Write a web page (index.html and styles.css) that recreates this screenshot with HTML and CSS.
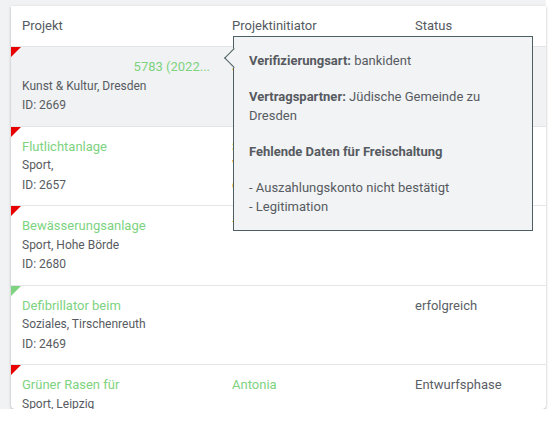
FILE: index.html
```html
<!DOCTYPE html>
<html lang="de">
<head>
<meta charset="utf-8">
<title>Projekte</title>
<link rel="stylesheet" href="styles.css">
</head>
<body>
<div class="page">
  <div class="card">
    <div class="row head">
      <div class="cell">Projekt</div>
      <div class="cell">Projektinitiator</div>
      <div class="cell">Status</div>
    </div>

    <div class="row item hover">
      <span class="flag red"></span>
      <div class="cell">
        <div class="title right">5783 (2022...</div>
        <div class="meta">Kunst &amp; Kultur, Dresden</div>
        <div class="meta">ID: 2669</div>
      </div>
      <div class="cell"><div class="title warn">Jüdische</div></div>
      <div class="cell"><div class="title status">in Prüfung</div></div>

      <div class="tooltip">
        <p><b>Verifizierungsart:</b> bankident</p>
        <p><b>Vertragspartner:</b> Jüdische Gemeinde zu Dresden</p>
        <p><b>Fehlende Daten für Freischaltung</b></p>
        <p>- Auszahlungskonto nicht bestätigt<br>- Legitimation</p>
      </div>
    </div>

    <div class="row item">
      <span class="flag red"></span>
      <div class="cell">
        <div class="title">Flutlichtanlage</div>
        <div class="meta">Sport,</div>
        <div class="meta">ID: 2657</div>
      </div>
      <div class="cell">
        <div class="title warn">SV</div>
        <div class="meta warn">Verein</div>
        <div class="meta warn">offen</div>
      </div>
      <div class="cell"><div class="title status">in Prüfung</div></div>
    </div>

    <div class="row item">
      <span class="flag red"></span>
      <div class="cell">
        <div class="title">Bewässerungsanlage</div>
        <div class="meta">Sport, Hohe Börde</div>
        <div class="meta">ID: 2680</div>
      </div>
      <div class="cell"><div class="title warn">TSV</div></div>
      <div class="cell"><div class="title status">offen</div></div>
    </div>

    <div class="row item">
      <span class="flag green"></span>
      <div class="cell">
        <div class="title">Defibrillator beim</div>
        <div class="meta">Soziales, Tirschenreuth</div>
        <div class="meta">ID: 2469</div>
      </div>
      <div class="cell"></div>
      <div class="cell"><div class="title status">erfolgreich</div></div>
    </div>

    <div class="row item">
      <span class="flag red"></span>
      <div class="cell">
        <div class="title">Grüner Rasen für</div>
        <div class="meta">Sport, Leipzig</div>
        <div class="meta">ID: 2701</div>
      </div>
      <div class="cell"><div class="title">Antonia</div></div>
      <div class="cell"><div class="title status">Entwurfsphase</div></div>
    </div>
  </div>
</div>
</body>
</html>
```

FILE: styles.css
```css
* { box-sizing: border-box; }

html, body {
  margin: 0;
  padding: 0;
  background: #ffffff;
  font-family: Roboto, "Liberation Sans", Arial, sans-serif;
  color: #575b61;
}

.page {
  width: 546px;
  height: 409px;
  padding: 6px 0 0 11px;
  background: #f1f2f4;
}

.card {
  position: relative;
  width: 535px;
  height: 403px;
  background: #ffffff;
  border-radius: 0 0 4px 4px;
  box-shadow: 0 1px 3px rgba(0, 0, 0, 0.28);
  overflow: hidden;
}

.row {
  display: grid;
  grid-template-columns: 210px 183px 1fr;
  border-bottom: 1px solid #e3e5e8;
  position: relative;
}

.cell {
  padding: 0 11px;
  min-width: 0;
}

.head {
  height: 41px;
  align-items: center;
  font-size: 13px;
  color: #555a60;
  padding-bottom: 1px;
}

.item {
  padding: 10px 0;
  height: 79.5px;
  overflow: visible;
}

.item.hover {
  background: #f1f2f4;
}

.title {
  font-size: 13px;
  line-height: 19.5px;
  color: #7dd37f;
  white-space: nowrap;
  overflow: hidden;
  text-overflow: ellipsis;
}

.title.right { text-align: right; }

.title.status { color: #5a5e65; }

.warn { color: #f0b63a; }

.meta {
  font-size: 12px;
  line-height: 19.5px;
  color: #575b61;
  white-space: nowrap;
}

.meta.warn { color: #ec9a3c; }

.flag {
  position: absolute;
  top: 0;
  left: 0;
  width: 0;
  height: 0;
  border-style: solid;
  border-width: 10px 10px 0 0;
}

.flag.red { border-color: #e80000 transparent transparent transparent; }
.flag.green { border-color: #7dd37f transparent transparent transparent; }

.tooltip {
  position: absolute;
  z-index: 5;
  left: 222px;
  top: -11px;
  width: 300px;
  height: 195px;
  padding: 15px 15px 0;
  background: #f1f3f5;
  border: 1px solid #4d5f63;
  font-size: 13px;
  line-height: 18.2px;
  color: #575b61;
}

.tooltip::before {
  content: "";
  position: absolute;
  left: -7px;
  top: 14px;
  width: 13px;
  height: 13px;
  background: #f1f3f5;
  border-left: 1px solid #4d5f63;
  border-bottom: 1px solid #4d5f63;
  transform: rotate(45deg);
}

.tooltip p {
  margin: 0 0 18.2px;
}

.tooltip p:last-child { margin-bottom: 0; }

.tooltip b {
  font-weight: 700;
  color: #565a60;
}
```
